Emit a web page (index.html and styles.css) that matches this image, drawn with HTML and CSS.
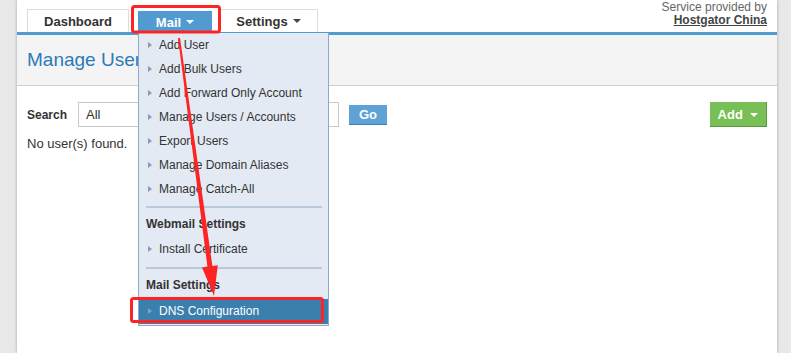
FILE: index.html
```html
<!DOCTYPE html>
<html lang="en">

<head>
    <meta charset="UTF-8">
    <meta name="viewport" content="width=device-width, initial-scale=1.0">
    <title>Manage Users</title>
    <link rel="stylesheet" href="styles.css">
</head>

<body>
    <div class="page">
        <header class="topbar">
            <nav class="tabs">
                <a class="tab">Dashboard</a>
                <a class="tab active">Mail <span class="caret"></span></a>
                <a class="tab">Settings <span class="caret dark"></span></a>
            </nav>
            <div class="provider">
                <div>Service provided by</div>
                <a class="provider-link">Hostgator China</a>
            </div>
        </header>

        <div class="titlebar">
            <h1>Manage Users</h1>
        </div>

        <main class="content">
            <div class="search-row">
                <label class="search-label" for="search">Search</label>
                <input class="search-input" id="search" type="text" value="All">
                <button class="btn-go">Go</button>
                <button class="btn-add">Add <span class="caret"></span></button>
            </div>
            <p class="empty">No user(s) found.</p>
        </main>

        <ul class="menu">
            <li class="item">Add User</li>
            <li class="item">Add Bulk Users</li>
            <li class="item">Add Forward Only Account</li>
            <li class="item">Manage Users / Accounts</li>
            <li class="item">Export Users</li>
            <li class="item">Manage Domain Aliases</li>
            <li class="item">Manage Catch-All</li>
            <li class="sep"></li>
            <li class="heading">Webmail Settings</li>
            <li class="item">Install Certificate</li>
            <li class="sep"></li>
            <li class="heading">Mail Settings</li>
            <li class="item selected">DNS Configuration</li>
        </ul>
    </div>

    <!-- red annotation marks -->
    <svg class="marks" width="791" height="353" viewBox="0 0 791 353">
        <rect x="132.5" y="6.5" width="87" height="25.5" rx="2" fill="none" stroke="#ff2424" stroke-width="3"/>
        <rect x="131.5" y="298.5" width="191" height="23" rx="2" fill="none" stroke="#ff2424" stroke-width="3"/>
        <polygon fill="#ff2424" points="180,37.9 212.4,266 217.8,265.2 214,296 202,267.4 207.4,266.6 178,38.1"/>
    </svg>
</body>

</html>
```

FILE: styles.css
```css
body {
    margin: 0;
    padding: 0;
    background-color: #e8e8e8;
    font-family: 'Liberation Sans', Arial, sans-serif;
    color: #333;
    overflow: hidden;
}

.page {
    position: relative;
    margin: 0 14px 0 17px;
    min-height: 353px;
    background-color: white;
    box-shadow: 0 0 3px rgba(0, 0, 0, 0.3);
}

.topbar {
    display: flex;
    justify-content: space-between;
    align-items: flex-end;
    height: 32px;
    padding: 0 10px;
    border-bottom: 3px solid #519bd1;
}

.tabs {
    display: flex;
    align-items: flex-end;
}

.tab {
    display: flex;
    align-items: center;
    justify-content: center;
    gap: 5px;
    height: 23px;
    box-sizing: border-box;
    border: 1px solid #dcdcdc;
    border-bottom: none;
    font-size: 13px;
    font-weight: bold;
    color: #333;
}

.tab:nth-child(1) {
    width: 102px;
}

.tab:nth-child(2) {
    width: 74px;
    margin-left: 9px;
}

.tab:nth-child(3) {
    width: 99px;
    margin-left: 7px;
}

.tab.active {
    height: 21px;
    background-color: #519bd1;
    border-color: #519bd1;
    color: white;
}

.caret {
    display: inline-block;
    width: 0;
    height: 0;
    border-left: 4px solid transparent;
    border-right: 4px solid transparent;
    border-top: 4px solid white;
}

.caret.dark {
    border-top-color: #444;
}

.provider {
    align-self: flex-start;
    padding-top: 1px;
    text-align: right;
    font-size: 12px;
    line-height: 13px;
    color: #666;
}

.provider-link {
    font-weight: bold;
    color: #444;
    text-decoration: underline;
}

.titlebar {
    height: 50px;
    display: flex;
    align-items: center;
    padding: 0 10px;
    background-color: #f4f4f4;
    border-bottom: 1px solid #cfcfcf;
}

.titlebar h1 {
    margin: 0;
    font-size: 19px;
    font-weight: normal;
    color: #2d7ab8;
}

.content {
    padding: 16px 10px;
}

.search-row {
    display: flex;
    align-items: center;
    height: 25px;
}

.search-label {
    width: 51px;
    font-size: 12px;
    font-weight: bold;
    color: #333;
}

.search-input {
    width: 261px;
    height: 25px;
    box-sizing: border-box;
    border: 1px solid #c8c8c8;
    padding: 0 7px;
    font-family: inherit;
    font-size: 13px;
    color: #333;
}

.btn-go {
    margin-left: 10px;
    width: 38px;
    height: 20px;
    border: none;
    border-bottom: 1px solid #3f7fb0;
    background-color: #5ea2d6;
    color: white;
    font-family: inherit;
    font-size: 13px;
    font-weight: bold;
    padding: 0;
}

.btn-add {
    margin-left: auto;
    width: 57px;
    height: 25px;
    border: none;
    border-bottom: 1px solid #5a9a3c;
    border-right: 1px solid #5a9a3c;
    background-color: #77bf56;
    color: white;
    font-family: inherit;
    font-size: 13px;
    font-weight: bold;
    padding: 0;
}

.btn-add .caret {
    margin-left: 4px;
    vertical-align: middle;
}

.empty {
    margin: 9px 0 0 0;
    font-size: 13px;
    color: #333;
}

.menu {
    position: absolute;
    top: 33px;
    left: 121px;
    width: 191px;
    box-sizing: border-box;
    margin: 0;
    padding: 0 0 1px 0;
    list-style: none;
    background-color: #e4eaf3;
    border: 1px solid #8ea9cc;
    border-top: none;
    z-index: 2;
}

.menu .item {
    position: relative;
    height: 24px;
    line-height: 24px;
    padding-left: 20px;
    font-size: 12px;
    color: #333;
}

.menu .item::before {
    content: "";
    position: absolute;
    left: 9px;
    top: 9px;
    border-top: 3.5px solid transparent;
    border-bottom: 3.5px solid transparent;
    border-left: 4px solid #8c9bb0;
}

.menu .item.selected {
    margin-top: 1px;
    background-color: #3b7fae;
    color: white;
}

.menu .item.selected::before {
    border-left-color: #7ea4c4;
}

.menu .sep {
    height: 2px;
    margin: 5px 6px 4px 7px;
    background-color: #b9c9dc;
}

.menu .sep + .heading + .item {
    height: 25px;
}

.menu .heading {
    height: 25px;
    line-height: 25px;
    padding-left: 7px;
    font-size: 12px;
    font-weight: bold;
    color: #333;
}

.marks {
    position: absolute;
    top: 0;
    left: 0;
    pointer-events: none;
    z-index: 5;
}
```
